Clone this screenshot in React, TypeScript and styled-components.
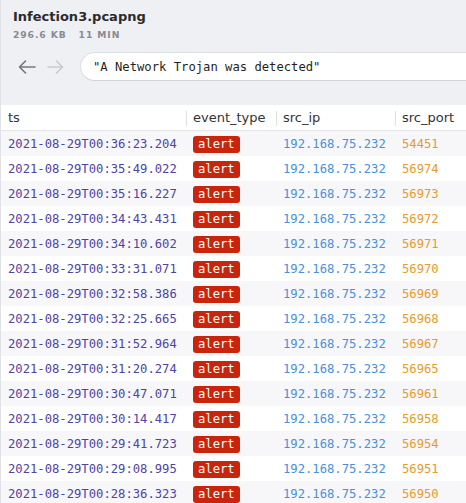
import React from "react";
import styled, { createGlobalStyle } from "styled-components";

const Global = createGlobalStyle`
  html, body { margin: 0; padding: 0; background: #eff0f4; }
  * { box-sizing: border-box; }
`;

const Window = styled.div`
  width: 466px;
  height: 503px;
  overflow: hidden;
  background: #eff0f4;
  border-left: 1px solid #e1e2e7;
  display: flex;
  flex-direction: column;
`;

const Header = styled.header`
  padding: 9px 0 0 12px;
  display: flex;
  flex-direction: column;
`;

const Title = styled.h1`
  margin: 0;
  font-family: "DejaVu Sans", sans-serif;
  font-weight: bold;
  font-size: 13px;
  line-height: 16px;
  color: #2b2b2e;
`;

const Meta = styled.div`
  margin-top: 4px;
  display: flex;
  gap: 12px;
  font-family: "DejaVu Sans", sans-serif;
  font-weight: bold;
  font-size: 9.2px;
  line-height: 11px;
  letter-spacing: 0.9px;
  color: #8a8a90;
`;

const Toolbar = styled.div`
  margin-top: 12px;
  display: flex;
  align-items: center;
  padding-left: 17px;
  margin-right: -40px;
`;

const NavButton = styled.button<{ $disabled?: boolean }>`
  border: 0;
  background: none;
  padding: 0;
  width: 18px;
  height: 14px;
  margin-right: ${(p) => (p.$disabled ? "15px" : "11px")};
  color: ${(p) => (p.$disabled ? "#c9cacf" : "#76777c")};
  display: flex;
`;

const Search = styled.div`
  flex: 1;
  height: 29px;
  border-radius: 15px;
  background: #ffffff;
  border: 1px solid #dedfe3;
  border-bottom-color: #d3d4d9;
  display: flex;
  align-items: center;
  padding-left: 12px;
  font-family: "DejaVu Sans Mono", monospace;
  font-size: 12.2px;
  color: #1f1f22;
  white-space: pre;
`;

const Table = styled.div`
  margin-top: 24px;
  background: #ffffff;
  flex: 1;
  display: grid;
  grid-template-columns: 185px 90px 119px 1fr;
  grid-template-rows: 26px;
  grid-auto-rows: 25px;
  align-content: start;
`;

const HeadCell = styled.div<{ $first?: boolean }>`
  position: relative;
  display: flex;
  align-items: center;
  padding-left: 7px;
  border-bottom: 1px solid #e4e4e7;
  font-family: "DejaVu Sans", sans-serif;
  font-size: 13px;
  color: #333336;
  &::before {
    content: "";
    display: ${(p) => (p.$first ? "none" : "block")};
    position: absolute;
    left: 0;
    top: 6px;
    height: 15px;
    width: 1px;
    background: #e0e0e3;
  }
`;

const Cell = styled.div<{ $odd: boolean; $color?: string }>`
  display: flex;
  align-items: center;
  padding-left: 7px;
  padding-top: 1px;
  background: ${(p) => (p.$odd ? "#f7f7f9" : "#ffffff")};
  font-family: "DejaVu Sans Mono", monospace;
  font-size: 12.2px;
  color: ${(p) => p.$color || "#333"};
  white-space: nowrap;
  overflow: hidden;
`;

const Badge = styled.span`
  display: inline-flex;
  align-items: center;
  height: 17px;
  padding: 0 5px;
  border-radius: 3px;
  background: #c9250c;
  color: #ffffff;
  font-family: "DejaVu Sans Mono", monospace;
  font-size: 12.2px;
`;

const HeadRow = styled.div`
  display: contents;
`;

const rows: [string, string][] = [
  ["2021-08-29T00:36:23.204", "54451"],
  ["2021-08-29T00:35:49.022", "56974"],
  ["2021-08-29T00:35:16.227", "56973"],
  ["2021-08-29T00:34:43.431", "56972"],
  ["2021-08-29T00:34:10.602", "56971"],
  ["2021-08-29T00:33:31.071", "56970"],
  ["2021-08-29T00:32:58.386", "56969"],
  ["2021-08-29T00:32:25.665", "56968"],
  ["2021-08-29T00:31:52.964", "56967"],
  ["2021-08-29T00:31:20.274", "56965"],
  ["2021-08-29T00:30:47.071", "56961"],
  ["2021-08-29T00:30:14.417", "56958"],
  ["2021-08-29T00:29:41.723", "56954"],
  ["2021-08-29T00:29:08.995", "56951"],
  ["2021-08-29T00:28:36.323", "56950"],
];

const Arrow = ({ dir }: { dir: "left" | "right" }) => (
  <svg width="18" height="14" viewBox="0 0 18 14" fill="none" stroke="currentColor" strokeWidth="1.6" strokeLinecap="round" strokeLinejoin="round">
    {dir === "left" ? (
      <path d="M17 7H1.5M7.5 1L1.5 7l6 6" />
    ) : (
      <path d="M1 7h14.5M9.5 1l6 6-6 6" />
    )}
  </svg>
);

export default function App() {
  return (
    <Window>
      <Global />
      <Header>
        <Title>Infection3.pcapng</Title>
        <Meta>
          <span>296.6 KB</span>
          <span>11 MIN</span>
        </Meta>
      </Header>
      <Toolbar>
        <NavButton aria-label="back">
          <Arrow dir="left" />
        </NavButton>
        <NavButton $disabled aria-label="forward">
          <Arrow dir="right" />
        </NavButton>
        <Search>"A Network Trojan was detected"</Search>
      </Toolbar>
      <Table>
        <HeadRow>
          <HeadCell $first>ts</HeadCell>
          <HeadCell>event_type</HeadCell>
          <HeadCell>src_ip</HeadCell>
          <HeadCell>src_port</HeadCell>
        </HeadRow>
        {rows.map(([ts, port], i) => {
          const odd = i % 2 === 0;
          return (
            <React.Fragment key={ts}>
              <Cell $odd={odd} $color="#4f43a3">{ts}</Cell>
              <Cell $odd={odd}>
                <Badge>alert</Badge>
              </Cell>
              <Cell $odd={odd} $color="#4a8fdc">192.168.75.232</Cell>
              <Cell $odd={odd} $color="#e69b2c">{port}</Cell>
            </React.Fragment>
          );
        })}
      </Table>
    </Window>
  );
}
